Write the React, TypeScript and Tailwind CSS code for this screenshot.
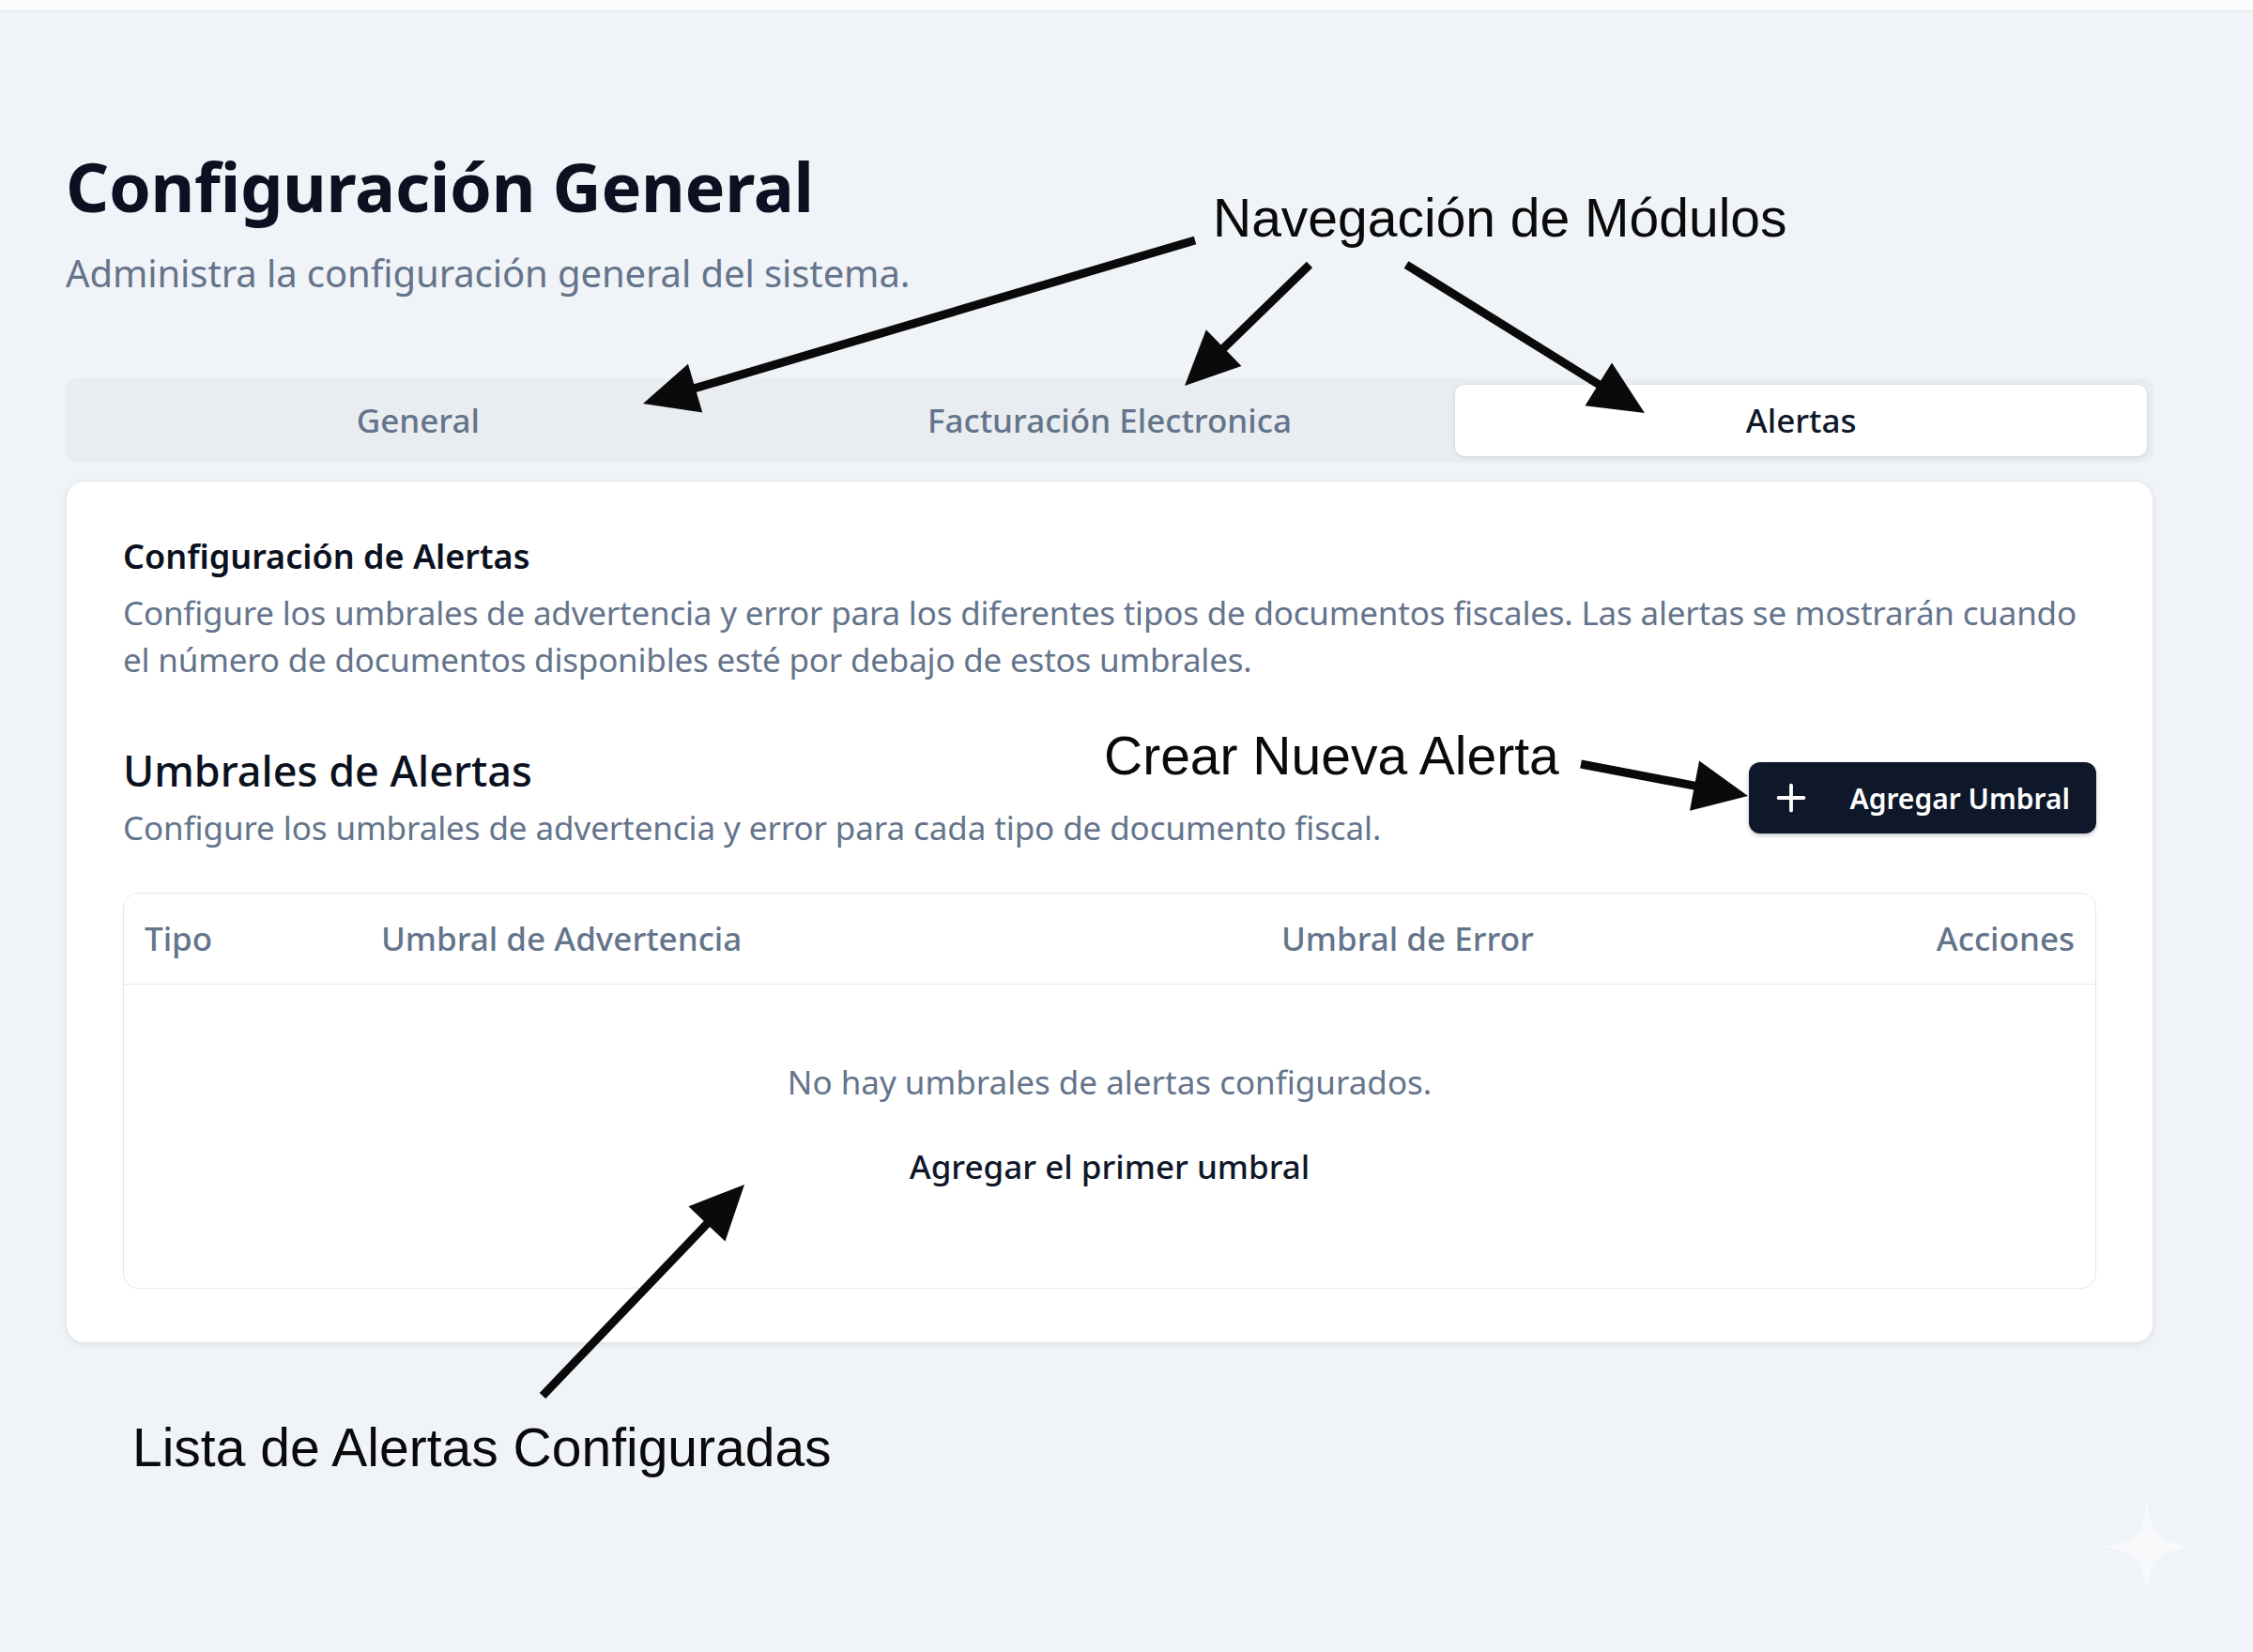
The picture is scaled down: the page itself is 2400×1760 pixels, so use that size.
import React from 'react';
import { Plus } from 'lucide-react';

type Arrow = { x1: number; y1: number; x2: number; y2: number };

const arrows: Arrow[] = [
  { x1: 1273, y1: 256, x2: 685, y2: 430 },
  { x1: 1395, y1: 282, x2: 1262, y2: 411 },
  { x1: 1498, y1: 282, x2: 1752, y2: 440 },
  { x1: 1684, y1: 814, x2: 1862, y2: 848 },
  { x1: 578, y1: 1487, x2: 793, y2: 1262 },
];

const ArrowShape: React.FC<Arrow> = ({ x1, y1, x2, y2 }) => {
  const dx = x2 - x1;
  const dy = y2 - y1;
  const len = Math.hypot(dx, dy);
  const ux = dx / len;
  const uy = dy / len;
  const head = 58;
  const half = 27;
  const bx = x2 - ux * head;
  const by = y2 - uy * head;
  const pts = `${x2},${y2} ${bx - uy * half},${by + ux * half} ${bx + uy * half},${by - ux * half}`;
  return (
    <g>
      <line x1={x1} y1={y1} x2={bx + ux * 4} y2={by + uy * 4} stroke="#0a0a0a" strokeWidth={9} />
      <polygon points={pts} fill="#0a0a0a" />
    </g>
  );
};

const Annotations: React.FC = () => (
  <div className="pointer-events-none absolute inset-0 font-['Liberation_Sans',Arial,sans-serif] text-[57px] leading-[56px] text-[#0a0a0a]">
    <svg className="absolute left-0 top-0" width={2400} height={1760} viewBox="0 0 2400 1760">
      {arrows.map((a, i) => (
        <ArrowShape key={i} {...a} />
      ))}
      <path
        transform="translate(2287 1648)"
        d="M0,-48 C6,-10 10,-6 48,0 C10,6 6,10 0,48 C-6,10 -10,6 -48,0 C-10,-6 -6,-10 0,-48Z"
        fill="#ffffff"
        opacity={0.5}
      />
    </svg>
    <div className="absolute left-[1292px] top-[204px] whitespace-nowrap">Navegación de Módulos</div>
    <div className="absolute left-[1176px] top-[777px] whitespace-nowrap">Crear Nueva Alerta</div>
    <div className="absolute left-[141px] top-[1514px] whitespace-nowrap">Lista de Alertas Configuradas</div>
  </div>
);

const tabs = ['General', 'Facturación Electronica', 'Alertas'];

export default function App() {
  return (
    <div className="relative min-h-[1760px] w-[2400px] overflow-hidden bg-[#f0f3f7] font-['Noto_Sans',sans-serif]">
      <div className="h-[12px] border-b border-[#dfe3e8] bg-[#fbfcfd]" />

      <main className="pl-[70px] pr-[106px] pt-[142px]">
        <h1 className="text-[72px] font-bold leading-[88px] tracking-[-0.3px] text-[#0b1120]">
          Configuración General
        </h1>
        <p className="mt-[21px] text-[40px] leading-[56px] tracking-[-0.1px] text-[#64748b]">
          Administra la configuración general del sistema.
        </p>

        <div className="mt-[84px] grid h-[90px] grid-cols-3 rounded-[14px] bg-[#e9edf1] p-[7px]">
          {tabs.map((t) => (
            <div
              key={t}
              className={
                t === 'Alertas'
                  ? 'flex items-center justify-center rounded-[10px] bg-white text-[35px] font-medium text-[#0f172a] shadow-[0_1px_4px_rgba(15,23,42,0.12)]'
                  : 'flex items-center justify-center text-[35px] font-medium text-[#64748b]'
              }
            >
              {t}
            </div>
          ))}
        </div>

        <section className="mt-[19px] rounded-[20px] border border-[#e2e8f0] bg-white px-[60px] pb-[57px] pt-[58px] shadow-[0_2px_6px_rgba(15,23,42,0.08)]">
          <h2 className="text-[36px] font-semibold leading-[44px] text-[#0b1120]">Configuración de Alertas</h2>
          <p className="mt-[13px] text-[35px] leading-[50px] tracking-[-0.2px] text-[#64748b]">
            Configure los umbrales de advertencia y error para los diferentes tipos de documentos fiscales. Las
            alertas se mostrarán cuando el número de documentos disponibles esté por debajo de estos umbrales.
          </p>

          <div className="mt-[65px] flex items-center justify-between">
            <div>
              <h3 className="text-[45px] font-medium leading-[56px] text-[#0b1120]">Umbrales de Alertas</h3>
              <p className="mt-[8px] text-[35px] leading-[50px] tracking-[-0.1px] text-[#64748b]">
                Configure los umbrales de advertencia y error para cada tipo de documento fiscal.
              </p>
            </div>
            <button className="flex h-[76px] items-center gap-[39px] rounded-[12px] bg-[#0f172a] pl-[22px] pr-[28px] text-[30px] font-semibold text-white shadow-[0_2px_4px_rgba(15,23,42,0.25)]">
              <Plus size={46} strokeWidth={2} />
              Agregar Umbral
            </button>
          </div>

          <div className="mt-[44px] overflow-hidden rounded-[16px] border border-[#e2e8f0]">
            <div className="grid h-[97px] grid-cols-[252px_959px_1fr_auto] items-center border-b border-[#e2e8f0] px-[22px] text-[35px] font-medium leading-[50px] text-[#64748b]">
              <div>Tipo</div>
              <div>Umbral de Advertencia</div>
              <div>Umbral de Error</div>
              <div className="text-right">Acciones</div>
            </div>
            <div className="flex flex-col items-center pb-[104px] pt-[79px] text-[35px] leading-[50px]">
              <p className="text-[#64748b]">No hay umbrales de alertas configurados.</p>
              <button className="mt-[40px] font-medium text-[#0f172a]">Agregar el primer umbral</button>
            </div>
          </div>
        </section>
      </main>

      <Annotations />
    </div>
  );
}
